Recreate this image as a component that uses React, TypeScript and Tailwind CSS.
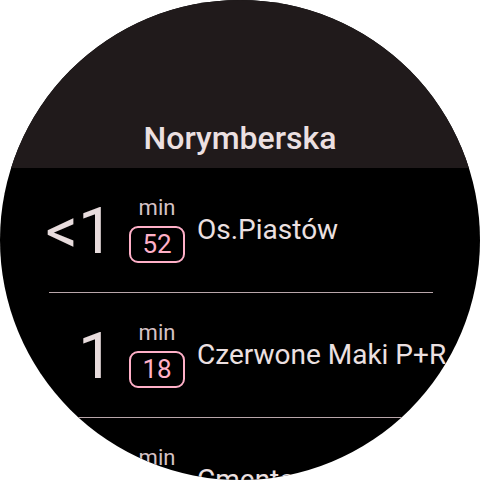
import React from "react";

const departures = [
  { eta: "<1", line: "52", dest: "Os.Piastów" },
  { eta: "1", line: "18", dest: "Czerwone Maki P+R" },
  { eta: "3", line: "4", dest: "Cmentarz Rakowicki" },
];

const Row = ({ eta, line, dest }: { eta: string; line: string; dest: string }) => {
  return (
    <div className="h-[124px] flex items-center whitespace-nowrap">
      <div className="w-[82px] shrink-0 text-right text-[64px] leading-none font-normal text-[#e8dcdd] mt-[4px]">
        {eta}
      </div>
      <div className="ml-[15px] w-[56px] shrink-0 flex flex-col items-center">
        <span className="text-[22px] leading-[20px] text-[#d6c2c6]">min</span>
        <div className="mt-[8px] w-[56px] h-[37px] border-2 border-[#ffb0c8] rounded-[9px] flex items-center justify-center text-[26px] leading-none text-[#ffb0c8]">
          {line}
        </div>
      </div>
      <div className="ml-[12px] text-[28px] leading-none text-[#ece0e1]">{dest}</div>
    </div>
  );
};

const App = () => {
  return (
    <div className="w-[480px] h-[480px] bg-white" style={{ fontFamily: "Roboto, 'Noto Sans', sans-serif" }}>
      <div className="w-[480px] h-[480px] rounded-full overflow-hidden bg-black flex flex-col">
        <div className="h-[168px] shrink-0 bg-[#201a1b] flex items-end justify-center pb-[14px]">
          <h1 className="text-[32px] leading-[32px] font-medium text-[#ece0e1]">Norymberska</h1>
        </div>
        <div className="px-8 overflow-hidden">
          {departures.map((d, i) => (
            <div key={i}>
              <Row {...d} />
              <div className="ml-[17px] mr-[15px] h-px bg-[#b9a6aa]" />
            </div>
          ))}
        </div>
      </div>
    </div>
  );
};

export default App;
